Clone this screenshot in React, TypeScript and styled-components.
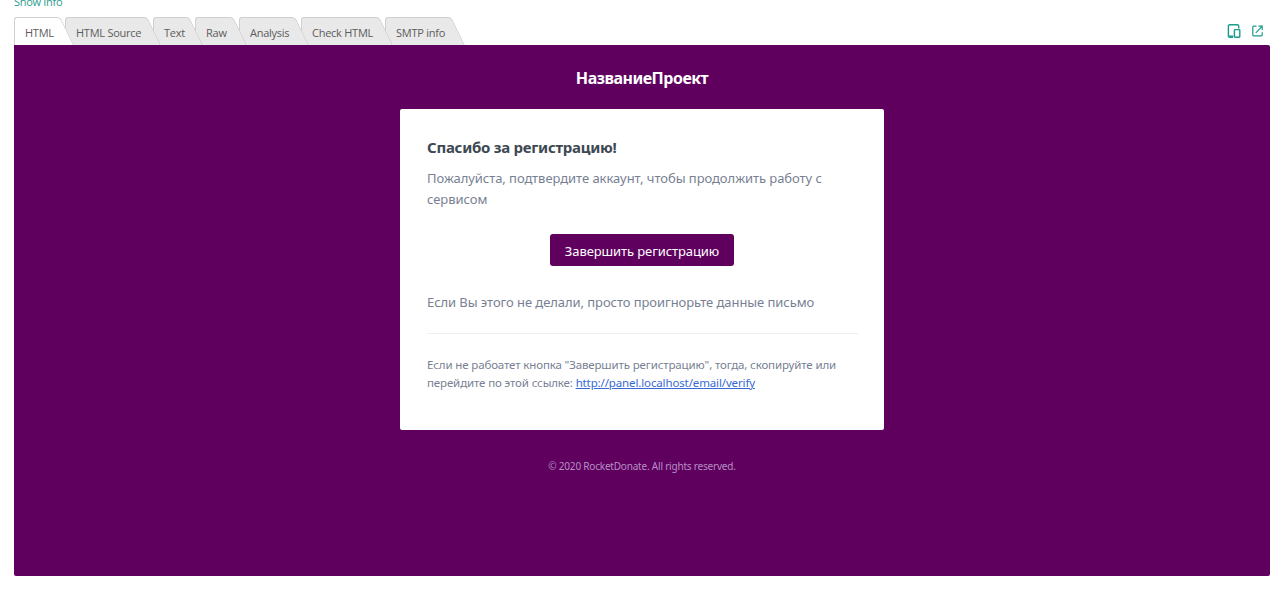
import React, { useState } from 'react'
import styled, { createGlobalStyle } from 'styled-components'

const tabs = [
    { name: 'HTML', width: 51 },
    { name: 'HTML Source', width: 88 },
    { name: 'Text', width: 42 },
    { name: 'Raw', width: 44 },
    { name: 'Analysis', width: 62 },
    { name: 'Check HTML', width: 84 },
    { name: 'SMTP info', width: 72 },
]

const App = () => {
    const [active, setActive] = useState('HTML')

    return (
        <Page>
            <GlobalStyle />
            <ShowInfo>Show Info</ShowInfo>

            <TabBar>
                <Tabs>
                    {tabs.map((tab, i) => (
                        <Tab
                            key={tab.name}
                            $width={tab.width}
                            $order={tabs.length - i}
                            $active={tab.name === active}
                            onClick={() => setActive(tab.name)}
                        >
                            <TabLabel>{tab.name}</TabLabel>
                        </Tab>
                    ))}
                </Tabs>
                <Tools>
                    <DevicesIcon />
                    <OpenIcon />
                </Tools>
            </TabBar>

            <Preview>
                <Brand>НазваниеПроект</Brand>
                <Card>
                    <Title>Спасибо за регистрацию!</Title>
                    <Text>
                        <Line $spacing={-0.05}>Пожалуйста, подтвердите аккаунт, чтобы продолжить работу с</Line>
                        <Line $spacing={-0.05}>сервисом</Line>
                    </Text>
                    <Button type="button">Завершить регистрацию</Button>
                    <Text>
                        <Line $spacing={-0.07}>Если Вы этого не делали, просто проигнорьте данные письмо</Line>
                    </Text>
                    <Sub>
                        <Line $spacing={-0.13}>Если не рабоатет кнопка "Завершить регистрацию", тогда, скопируйте или</Line>
                        <Line $spacing={-0.13}>перейдите по этой ссылке: <Link href="#">http://panel.localhost/email/verify</Link></Line>
                    </Sub>
                </Card>
                <Copyright>© 2020 RocketDonate. All rights reserved.</Copyright>
            </Preview>
        </Page>
    )
}

export default App

const DevicesIcon = () => (
    <svg width="14" height="15" viewBox="0 0 14 15" fill="none" stroke="#1a9c8c" strokeWidth="1.4">
        <path d="M6 13.2H2.6a1.2 1.2 0 0 1-1.2-1.2V2a1.2 1.2 0 0 1 1.2-1.2h7.9A1.2 1.2 0 0 1 11.7 2v2.5" />
        <path d="M1.4 12.2h5" />
        <rect x="7.4" y="5.6" width="5.4" height="7.6" rx="0.6" />
    </svg>
)

const OpenIcon = () => (
    <svg width="11" height="12" viewBox="0 0 11 12" fill="none" stroke="#1a9c8c" strokeWidth="1.2">
        <path d="M4.5 1.2H1.6a.8.8 0 0 0-.8.8v8a.8.8 0 0 0 .8.8h7.8a.8.8 0 0 0 .8-.8V7.2" />
        <path d="M6.4 1.2h3.8V5M10.2 1.2L3.8 7.8" />
    </svg>
)

const GlobalStyle = createGlobalStyle`
body {
margin: 0;
background-color: white;
overflow: hidden;
font-family: "Noto Sans", "Open Sans", sans-serif;
}
* {
box-sizing: border-box;
}
`

const Page = styled.div`
height: 594px;
padding: 0 10px 0 14px;
overflow: hidden;
`

const ShowInfo = styled.div`
height: 17px;
margin-top: -7px;
margin-bottom: 7px;
font-family: "Open Sans", sans-serif;
font-size: 11px;
line-height: 17px;
letter-spacing: -0.3px;
color: #2a9d8f;
`

const TabBar = styled.div`
display: flex;
justify-content: space-between;
height: 28px;
`

const Tabs = styled.div`
display: flex;
`

const Tab = styled.div<{ $width: number, $order: number, $active: boolean }>`
position: relative;
z-index: ${p => p.$order};
width: ${p => p.$width}px;
height: 28px;
cursor: pointer;

&::before, &::after {
content: "";
position: absolute;
top: 0;
bottom: 0;
background-color: ${p => p.$active ? 'white' : '#e9e9e9'};
border: 0 solid #cfcfcf;
border-top-width: 1px;
}
&::before {
left: 0;
width: 56%;
border-left-width: 1px;
border-top-left-radius: 3px;
}
&::after {
left: 50%;
right: -8px;
border-right-width: 1px;
border-top-right-radius: 4px;
transform: skewX(26deg);
transform-origin: bottom right;
}
`

const TabLabel = styled.span`
position: relative;
z-index: 1;
display: block;
padding-left: 11px;
font-family: "Open Sans", sans-serif;
font-size: 11px;
line-height: 31px;
letter-spacing: -0.25px;
white-space: nowrap;
color: #5c5c5c;
`

const Tools = styled.div`
display: flex;
align-items: center;
gap: 11px;
padding-right: 7px;
`

const Preview = styled.div`
display: flex;
flex-direction: column;
align-items: center;
height: 531px;
border-radius: 0 2px 2px 2px;
background-color: #5f005f;
`

const Brand = styled.div`
height: 64px;
padding-top: 21px;
font-size: 16px;
line-height: 24px;
font-weight: bold;
letter-spacing: -0.5px;
color: white;
`

const Card = styled.div`
display: flex;
flex-direction: column;
width: 484px;
height: 321px;
padding: 26px 26px 26px 27px;
border-radius: 2px;
background-color: white;
`

const Title = styled.div`
margin-bottom: 9px;
font-size: 15px;
line-height: 24px;
font-weight: bold;
letter-spacing: -0.27px;
color: #3d4852;
`

const Text = styled.div`
font-size: 13px;
line-height: 21px;
color: #787f93;
`

const Line = styled.div<{ $spacing: number }>`
white-space: nowrap;
letter-spacing: ${p => p.$spacing}px;
`

const Button = styled.button`
align-self: center;
width: 184px;
height: 32px;
margin: 24px 1px 26px 0;
padding: 1px 0 0;
border: 0;
border-radius: 3px;
font-family: inherit;
font-size: 13px;
letter-spacing: -0.09px;
white-space: nowrap;
color: white;
background-color: #5f005f;
`

const Sub = styled.div`
margin-top: 20px;
padding-top: 22px;
border-top: 1px solid #edeff2;
font-size: 11.5px;
line-height: 18px;
color: #787f93;
`

const Link = styled.a`
color: #3869d4;
`

const Copyright = styled.div`
margin-top: 27px;
font-size: 10px;
line-height: 18px;
letter-spacing: -0.2px;
color: #b68fc4;
`
